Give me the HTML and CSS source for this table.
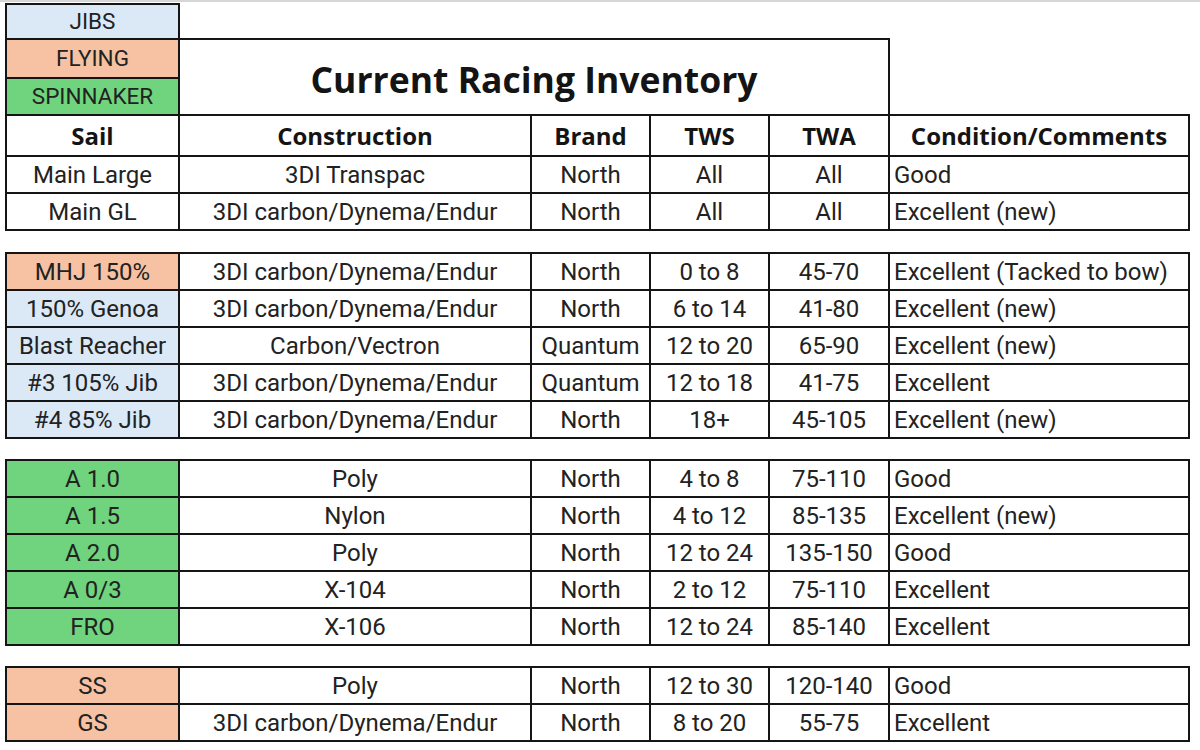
FILE: index.html
```html
<!DOCTYPE html>
<html lang="en">
<head>
<meta charset="utf-8">
<title>Current Racing Inventory</title>
<link rel="stylesheet" href="styles.css">
</head>
<body>
<div class="topbar"></div>
<table class="sheet">
  <colgroup>
    <col class="c-sail"><col class="c-cons"><col class="c-brand"><col class="c-tws"><col class="c-twa"><col class="c-comm">
  </colgroup>
  <tbody>
    <tr class="h-jibs"><td class="legend jib">JIBS</td><td class="blank" colspan="5"></td></tr>
    <tr class="h-fly"><td class="legend fly">FLYING</td><td class="title" colspan="4" rowspan="2">Current Racing Inventory</td><td class="blank" rowspan="2"></td></tr>
    <tr class="h-spin"><td class="legend spin">SPINNAKER</td></tr>
    <tr class="head"><th>Sail</th><th>Construction</th><th>Brand</th><th>TWS</th><th>TWA</th><th>Condition/Comments</th></tr>

    <tr class="row"><td>Main Large</td><td>3DI Transpac</td><td>North</td><td>All</td><td>All</td><td class="comm">Good</td></tr>
    <tr class="row"><td>Main GL</td><td>3DI carbon/Dynema/Endur</td><td>North</td><td>All</td><td>All</td><td class="comm">Excellent (new)</td></tr>
    <tr class="gap g1"><td colspan="6"></td></tr>

    <tr class="row"><td class="fly">MHJ 150%</td><td>3DI carbon/Dynema/Endur</td><td>North</td><td>0 to 8</td><td>45-70</td><td class="comm">Excellent (Tacked to bow)</td></tr>
    <tr class="row"><td class="jib">150% Genoa</td><td>3DI carbon/Dynema/Endur</td><td>North</td><td>6 to 14</td><td>41-80</td><td class="comm">Excellent (new)</td></tr>
    <tr class="row"><td class="jib">Blast Reacher</td><td>Carbon/Vectron</td><td>Quantum</td><td>12 to 20</td><td>65-90</td><td class="comm">Excellent (new)</td></tr>
    <tr class="row"><td class="jib">#3 105% Jib</td><td>3DI carbon/Dynema/Endur</td><td>Quantum</td><td>12 to 18</td><td>41-75</td><td class="comm">Excellent</td></tr>
    <tr class="row"><td class="jib">#4 85% Jib</td><td>3DI carbon/Dynema/Endur</td><td>North</td><td>18+</td><td>45-105</td><td class="comm">Excellent (new)</td></tr>
    <tr class="gap g2"><td colspan="6"></td></tr>

    <tr class="row"><td class="spin">A 1.0</td><td>Poly</td><td>North</td><td>4 to 8</td><td>75-110</td><td class="comm">Good</td></tr>
    <tr class="row"><td class="spin">A 1.5</td><td>Nylon</td><td>North</td><td>4 to 12</td><td>85-135</td><td class="comm">Excellent (new)</td></tr>
    <tr class="row"><td class="spin">A 2.0</td><td>Poly</td><td>North</td><td>12 to 24</td><td>135-150</td><td class="comm">Good</td></tr>
    <tr class="row"><td class="spin">A 0/3</td><td>X-104</td><td>North</td><td>2 to 12</td><td>75-110</td><td class="comm">Excellent</td></tr>
    <tr class="row"><td class="spin">FRO</td><td>X-106</td><td>North</td><td>12 to 24</td><td>85-140</td><td class="comm">Excellent</td></tr>
    <tr class="gap g3"><td colspan="6"></td></tr>

    <tr class="row"><td class="fly">SS</td><td>Poly</td><td>North</td><td>12 to 30</td><td>120-140</td><td class="comm">Good</td></tr>
    <tr class="row"><td class="fly">GS</td><td>3DI carbon/Dynema/Endur</td><td>North</td><td>8 to 20</td><td>55-75</td><td class="comm">Excellent</td></tr>
  </tbody>
</table>
</body>
</html>
```

FILE: styles.css
```css
html, body {
  margin: 0;
  padding: 0;
  background: #ffffff;
}

body {
  font-family: Roboto, "Liberation Sans", sans-serif;
  color: #222222;
  width: 1200px;
  height: 750px;
  overflow: hidden;
}

.topbar {
  height: 2px;
  background: #d6d6d6;
}

.sheet {
  margin: 1px 0 0 5px;
  border-collapse: collapse;
  table-layout: fixed;
  width: 1185px;
}

.c-sail { width: 173px; }
.c-cons { width: 352px; }
.c-brand { width: 119px; }
.c-tws { width: 119px; }
.c-twa { width: 120px; }
.c-comm { width: 300px; }

.sheet td,
.sheet th {
  border: 2px solid #151515;
  padding: 0 4px;
  text-align: center;
  vertical-align: middle;
  line-height: 1;
  white-space: nowrap;
  overflow: hidden;
}

.sheet td {
  font-size: 24px;
  font-weight: 400;
}

.sheet th {
  font-family: "Open Sans", Roboto, sans-serif;
  font-size: 24px;
  font-weight: 700;
  color: #141414;
}

.sheet td.blank {
  border: none;
}

.sheet .gap td {
  border-left: none;
  border-right: none;
  padding: 0;
}

.h-jibs { height: 35px; }
.h-fly { height: 39px; }
.h-spin { height: 37px; }
.head { height: 41px; }
.row { height: 37px; }
.g1 { height: 23px; }
.g2 { height: 22px; }
.g3 { height: 22px; }

.sheet td.legend {
  font-size: 22.5px;
}

.sheet td.title {
  font-family: "Open Sans", Roboto, sans-serif;
  font-size: 35.5px;
  font-weight: 700;
  color: #141414;
  padding-top: 6px;
}

.sheet td.comm {
  text-align: left;
  padding-left: 4px;
}

.jib { background: #dbe8f6; }
.fly { background: #f6c2a3; }
.spin { background: #6fd47d; }
```
